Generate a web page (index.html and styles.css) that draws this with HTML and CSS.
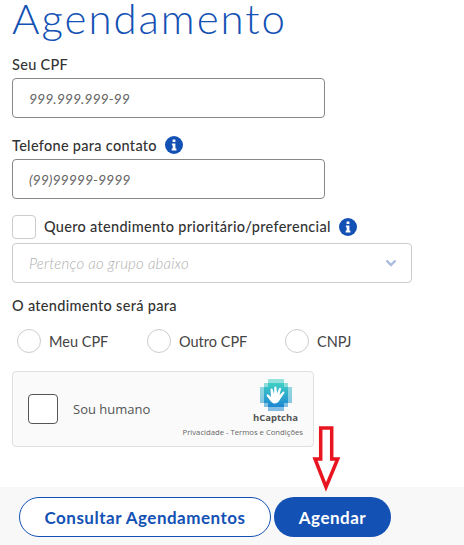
FILE: index.html
```html
<!DOCTYPE html>
<html lang="pt-BR">
<head>
    <meta charset="UTF-8">
    <title>Agendamento</title>
    <link rel="stylesheet" href="styles.css">
</head>
<body>

    <form class="form">
        <h1 class="title">Agendamento</h1>

        <label class="label label-cpf">Seu CPF</label>
        <div class="field field-short">999.999.999-99</div>

        <div class="label label-phone">
            Telefone para contato
            <svg class="info" viewBox="0 0 18 18"><circle cx="9" cy="9" r="9" fill="#1351b4"/><path d="M7.6 3.6h2.800v2.500H7.600zM6.900 7.400h3.500v5.200h1v1.800H6.700v-1.800h1V9.200h-.8z" fill="#fff"/></svg>
        </div>
        <div class="field field-short">(99)99999-9999</div>

        <div class="priority">
            <span class="checkbox"></span>
            <span class="priority-text">Quero atendimento prioritário/preferencial</span>
            <svg class="info" viewBox="0 0 18 18"><circle cx="9" cy="9" r="9" fill="#1351b4"/><path d="M7.6 3.6h2.800v2.500H7.600zM6.900 7.400h3.500v5.200h1v1.800H6.700v-1.800h1V9.200h-.8z" fill="#fff"/></svg>
        </div>
        <div class="field field-select">
            <span>Pertenço ao grupo abaixo</span>
            <svg class="chevron" viewBox="0 0 12 8"><path d="M1.500 1.500 6 6l4.500-4.500" fill="none" stroke="#a9bcdf" stroke-width="2.400"/></svg>
        </div>

        <div class="label label-for">O atendimento será para</div>
        <div class="radios">
            <div class="radio"><span class="circle"></span>Meu CPF</div>
            <div class="radio"><span class="circle"></span>Outro CPF</div>
            <div class="radio"><span class="circle"></span>CNPJ</div>
        </div>

        <div class="captcha">
            <span class="captcha-check"></span>
            <span class="captcha-text">Sou humano</span>
            <div class="captcha-brand">
                <svg class="captcha-logo" viewBox="0 0 32 32" shape-rendering="crispEdges">
                    <defs>
                        <linearGradient id="hc" x1="0" y1="0" x2="0" y2="1">
                            <stop offset="0" stop-color="#3fd0c4"/>
                            <stop offset="1" stop-color="#1f86d2"/>
                        </linearGradient>
                    </defs>
                    <path d="M8 0h16v4h4v4h4v16h-4v4h-4v4H8v-4H4v-4H0V8h4V4h4z" fill="url(#hc)" opacity=".55"/>
                    <path d="M8 4h16v4h4v16h-4v4H8v-4H4V8h4z" fill="url(#hc)"/>
                    <path d="M7 17.500c-1-2 .5-3 2-1.500l2 2-.5-7.500c0-1.500 1.800-1.500 2.200 0l1.300 4.500.3-6.500c0-1.500 2-1.500 2.200 0l.500 6 2-5c.4-1.400 2.200-1 2 .4l-1.500 6 3.200-3c1-1 2.300 0 1.600 1.200l-4 6c-1.500 3-3.500 5-6.500 4.300-2-.5-3.500-2.400-5.800-5.900z" fill="#fff" shape-rendering="auto"/>
                </svg>
                <span class="captcha-name">hCaptcha</span>
                <span class="captcha-links">Privacidade - Termos e Condições</span>
            </div>
        </div>
    </form>

    <footer class="actions">
        <button type="button" class="btn btn-outline">Consultar Agendamentos</button>
        <button type="button" class="btn btn-primary">Agendar</button>
    </footer>

    <!-- red arrow drawn over the screenshot -->
    <svg class="arrow" viewBox="0 0 30 68"><path d="M9.700 3h11v31h6L15 62 4 34h5.700z" fill="#fff" stroke="#e8141f" stroke-width="3.500"/></svg>

</body>
</html>
```

FILE: styles.css
```css
* {
    box-sizing: border-box;
}

body {
    margin: 0;
    width: 464px;
    height: 545px;
    overflow: hidden;
    position: relative;
    background: #fff;
    font-family: Lato, 'Open Sans', sans-serif;
    color: #333;
}

.form {
    padding: 0 12px;
    height: 487px;
}

.title {
    margin: 0 0 18px;
    font-size: 42px;
    line-height: 36px;
    font-weight: 300;
    color: #1351b4;
    letter-spacing: 1.950px;
}

.label {
    display: flex;
    align-items: center;
    gap: 8px;
    font-size: 14.500px;
    font-weight: 500;
    letter-spacing: 0.3px;
    height: 20px;
}

.label-cpf {
    margin-top: 4px;
    margin-bottom: 4px;
}

.label-phone {
    margin-top: 17px;
    margin-bottom: 4px;
}

.label-for {
    margin-top: 12px;
}

.info {
    width: 18px;
    height: 18px;
    flex: none;
}

.field {
    display: flex;
    align-items: center;
    height: 40px;
    padding: 0 16px;
    border: 1px solid #888;
    border-radius: 4px;
    font-size: 14px;
    font-style: italic;
    color: #666;
}

.field-short {
    width: 313px;
}

.field-select {
    justify-content: space-between;
    width: 400px;
    padding-right: 14px;
    border-color: #ccc;
    color: #b0b0b0;
    font-size: 15px;
    font-weight: 300;
    letter-spacing: 0.2px;
}

.chevron {
    width: 12px;
    height: 8px;
}

.priority {
    display: flex;
    align-items: center;
    margin-top: 16px;
    margin-bottom: 4px;
    height: 24px;
    font-size: 14.500px;
    font-weight: 500;
    letter-spacing: 0.3px;
}

.checkbox {
    width: 24px;
    height: 24px;
    border: 1px solid #ccc;
    border-radius: 4px;
    margin-right: 8px;
}

.priority-text {
    margin-right: 8px;
    padding-bottom: 2px;
}

.radios {
    display: grid;
    grid-template-columns: 130px 138px auto;
    margin-top: 14px;
    margin-left: 5px;
}

.radio {
    display: flex;
    align-items: center;
    gap: 8px;
    height: 24px;
    font-size: 14.500px;
    color: #444;
}

.circle {
    width: 24px;
    height: 24px;
    border: 1px solid #ccc;
    border-radius: 50%;
}

.captcha {
    display: flex;
    align-items: center;
    position: relative;
    width: 302px;
    height: 76px;
    margin-top: 18px;
    background: #fafafa;
    border: 1px solid #e0e0e0;
    border-radius: 4px;
    padding-left: 15px;
}

.captcha-check {
    width: 30px;
    height: 30px;
    background: #fff;
    border: 1px solid #555;
    border-radius: 4px;
}

.captcha-text {
    margin-left: 15px;
    font-family: 'Open Sans', sans-serif;
    font-size: 13px;
    color: #555;
    margin-top: -1px;
}

.captcha-brand {
    display: flex;
    flex-direction: column;
    align-items: flex-end;
    position: absolute;
    right: 10px;
    top: 7px;
}

.captcha-logo {
    width: 32px;
    height: 32px;
    margin-right: 11px;
}

.captcha-name {
    font-family: 'Open Sans', sans-serif;
    font-size: 9.500px;
    font-weight: 700;
    line-height: 14px;
    margin-right: 5px;
    color: #555;
}

.captcha-links {
    font-family: 'Open Sans', sans-serif;
    font-size: 7.700px;
    line-height: 11px;
    margin-top: 2px;
    color: #666;
}

.actions {
    display: flex;
    gap: 3px;
    height: 58px;
    padding: 10px 19px 0;
    background: #f8f8f8;
}

.btn {
    height: 40px;
    border-radius: 20px;
    font-family: Lato, 'Open Sans', sans-serif;
    font-size: 17px;
    font-weight: 700;
    letter-spacing: 0.5px;
    padding: 0;
}

.btn-outline {
    width: 252px;
    background: #fff;
    border: 1px solid #1351b4;
    color: #1351b4;
}

.btn-primary {
    width: 117px;
    background: #1351b4;
    border: none;
    color: #fff;
}

.arrow {
    position: absolute;
    left: 311px;
    top: 425px;
    width: 30px;
    height: 68px;
}
```
